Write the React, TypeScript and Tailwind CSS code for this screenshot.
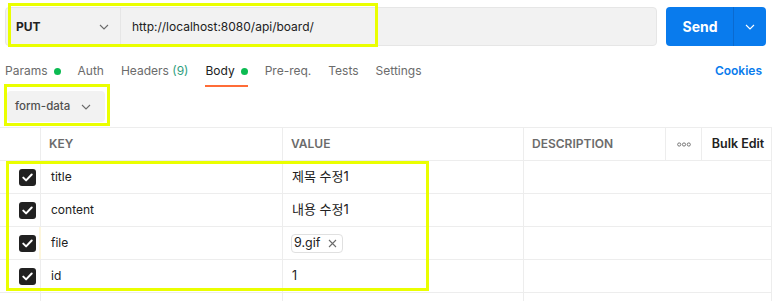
import React from 'react';

const font = { fontFamily: 'Inter, "Noto Sans CJK KR", sans-serif' };

function Chevron({ className = '' }: { className?: string }) {
  return (
    <svg width="10" height="6" viewBox="0 0 10 6" className={className} fill="none">
      <path d="M1 1l4 4 4-4" stroke="currentColor" strokeWidth="1.1" />
    </svg>
  );
}

function Check() {
  return (
    <div className="w-[17px] h-[17px] rounded-[3px] bg-[#212121] flex items-center justify-center">
      <svg width="11" height="9" viewBox="0 0 11 9" fill="none">
        <path d="M1.3 4.6l2.8 2.8 5.6-5.9" stroke="white" strokeWidth="2" strokeLinecap="round" strokeLinejoin="round" />
      </svg>
    </div>
  );
}

const tabs = [
  { label: 'Params', dot: true },
  { label: 'Auth' },
  { label: 'Headers', count: '(9)' },
  { label: 'Body', dot: true, active: true },
  { label: 'Pre-req.' },
  { label: 'Tests' },
  { label: 'Settings' },
];

const rows = [
  { key: 'title', value: '제목 수정1', ko: true },
  { key: 'content', value: '내용 수정1', ko: true },
  { key: 'file', value: '9.gif', file: true },
  { key: 'id', value: '1' },
];

export default function App() {
  return (
    <div className="relative w-[776px] h-[301px] overflow-hidden bg-white text-[#212121]" style={font}>
      {/* request bar */}
      <div className="flex pt-[7px] pl-[5px] gap-[9px]">
        <div className="w-[652px] h-[39px] bg-[#f2f2f2] border border-[#e6e6e6] rounded-[4px] flex items-stretch">
          <div className="w-[115px] border-r border-[#e6e6e6] flex items-center justify-between pl-[10px] pr-[11px]">
            <span className="text-[12px] font-bold">PUT</span>
            <Chevron className="text-[#6b6b6b]" />
          </div>
          <div className="flex items-center pl-[11px] text-[12px] text-[#212121]">http://localhost:8080/api/board/</div>
        </div>
        <div className="w-[100px] h-[39px] bg-[#097bed] rounded-[4px] flex text-white">
          <div className="w-[67px] flex items-center justify-center pl-[1px] text-[14px] font-bold">Send</div>
          <div className="flex-1 border-l border-[#0a6ad0] flex items-center justify-center">
            <Chevron />
          </div>
        </div>
      </div>

      {/* tabs */}
      <div className="mt-[7px] h-[34px] flex items-stretch pl-[5px] pr-[14px]">
        <div className="flex items-stretch gap-[17px]">
          {tabs.map((t) => (
            <div
              key={t.label}
              className={
                'flex items-center gap-[6px] pt-[4px] border-b-2 text-[12px] ' +
                (t.active ? 'border-[#ff6c37] text-[#212121]' : 'border-transparent text-[#6b6b6b]')
              }
            >
              <span>
                {t.label}
                {t.count && <span className="text-[#2f9e7e]"> {t.count}</span>}
              </span>
              {t.dot && <span className="w-[7px] h-[7px] rounded-full bg-[#0cbb52]" />}
            </div>
          ))}
        </div>
        <div className="ml-auto flex items-center pt-[4px] pb-[2px] text-[12px] font-semibold text-[#097bed]">Cookies</div>
      </div>

      {/* body type */}
      <div className="mt-[4px] ml-[7px] w-[98px] h-[31px] bg-[#f2f2f2] rounded-[4px] flex items-center justify-between pl-[8px] pr-[14px]">
        <span className="text-[11.5px] font-medium text-[#505050]">form-data</span>
        <Chevron className="text-[#6b6b6b]" />
      </div>

      {/* table */}
      <div className="mt-[5px] w-[772px] border-r border-[#ededed]">
        <div className="flex h-[33px] border-t border-[#ededed] text-[12px] font-semibold text-[#6b6b6b]">
          <div className="w-[41px] border-r border-[#ededed]" />
          <div className="w-[242px] border-r border-[#ededed] flex items-center pl-[8px]">KEY</div>
          <div className="w-[241px] border-r border-[#ededed] flex items-center pl-[8px]">VALUE</div>
          <div className="w-[142px] border-r border-[#ededed] flex items-center pl-[8px]">DESCRIPTION</div>
          <div className="w-[36px] border-r border-[#ededed] flex items-center justify-center">
            <svg width="14" height="5" viewBox="0 0 14 5" fill="none">
              <circle cx="2.2" cy="2.5" r="1.6" stroke="#6b6b6b" strokeWidth="0.9" />
              <circle cx="7" cy="2.5" r="1.6" stroke="#6b6b6b" strokeWidth="0.9" />
              <circle cx="11.8" cy="2.5" r="1.6" stroke="#6b6b6b" strokeWidth="0.9" />
            </svg>
          </div>
          <div className="flex-1 flex items-center justify-center pl-[3px] text-[12.5px] text-[#212121]">Bulk Edit</div>
        </div>
        {rows.map((r) => (
          <div key={r.key} className="flex h-[33px] border-t border-[#ededed] text-[12px]">
            <div className="w-[41px] border-r border-[#ededed] flex items-center pl-[19px]">
              <Check />
            </div>
            <div
              className={
                'border-r border-[#ededed] flex items-center pl-[10px] ' +
                (r.file ? 'border-l-2 border-l-[#fdf6dc] -ml-[2px] w-[244px]' : 'w-[242px]')
              }
            >
              {r.key}
            </div>
            <div className="w-[241px] border-r border-[#ededed] flex items-center pl-[8px]">
              {r.file ? (
                <span className="flex items-center gap-[8px] h-[19px] border border-[#e0e0e0] rounded-[4px] pl-[2px] pr-[5px] text-[12.5px]">
                  {r.value}
                  <svg width="9" height="9" viewBox="0 0 9 9" fill="none">
                    <path d="M1 1l7 7M8 1L1 8" stroke="#6b6b6b" strokeWidth="1.1" />
                  </svg>
                </span>
              ) : (
                <span className={'pl-[1px] ' + (r.ko ? 'text-[13px]' : 'text-[12.5px]')}>{r.value}</span>
              )}
            </div>
            <div className="flex-1" />
          </div>
        ))}
        <div className="flex h-[33px] border-t border-[#ededed]">
          <div className="w-[41px] border-r border-[#ededed]" />
          <div className="w-[242px] border-r border-[#ededed]" />
          <div className="w-[241px] border-r border-[#ededed]" />
          <div className="flex-1" />
        </div>
      </div>

      {/* highlight boxes */}
      <div className="absolute left-[8px] top-[3px] w-[370px] h-[44px] border-[3px] border-[#eaff00]" />
      <div className="absolute left-[4px] top-[84px] w-[106px] h-[42px] border-[3px] border-[#eaff00]" />
      <div className="absolute left-[6px] top-[161px] w-[423px] h-[130px] border-[3px] border-[#eaff00]" />
    </div>
  );
}
